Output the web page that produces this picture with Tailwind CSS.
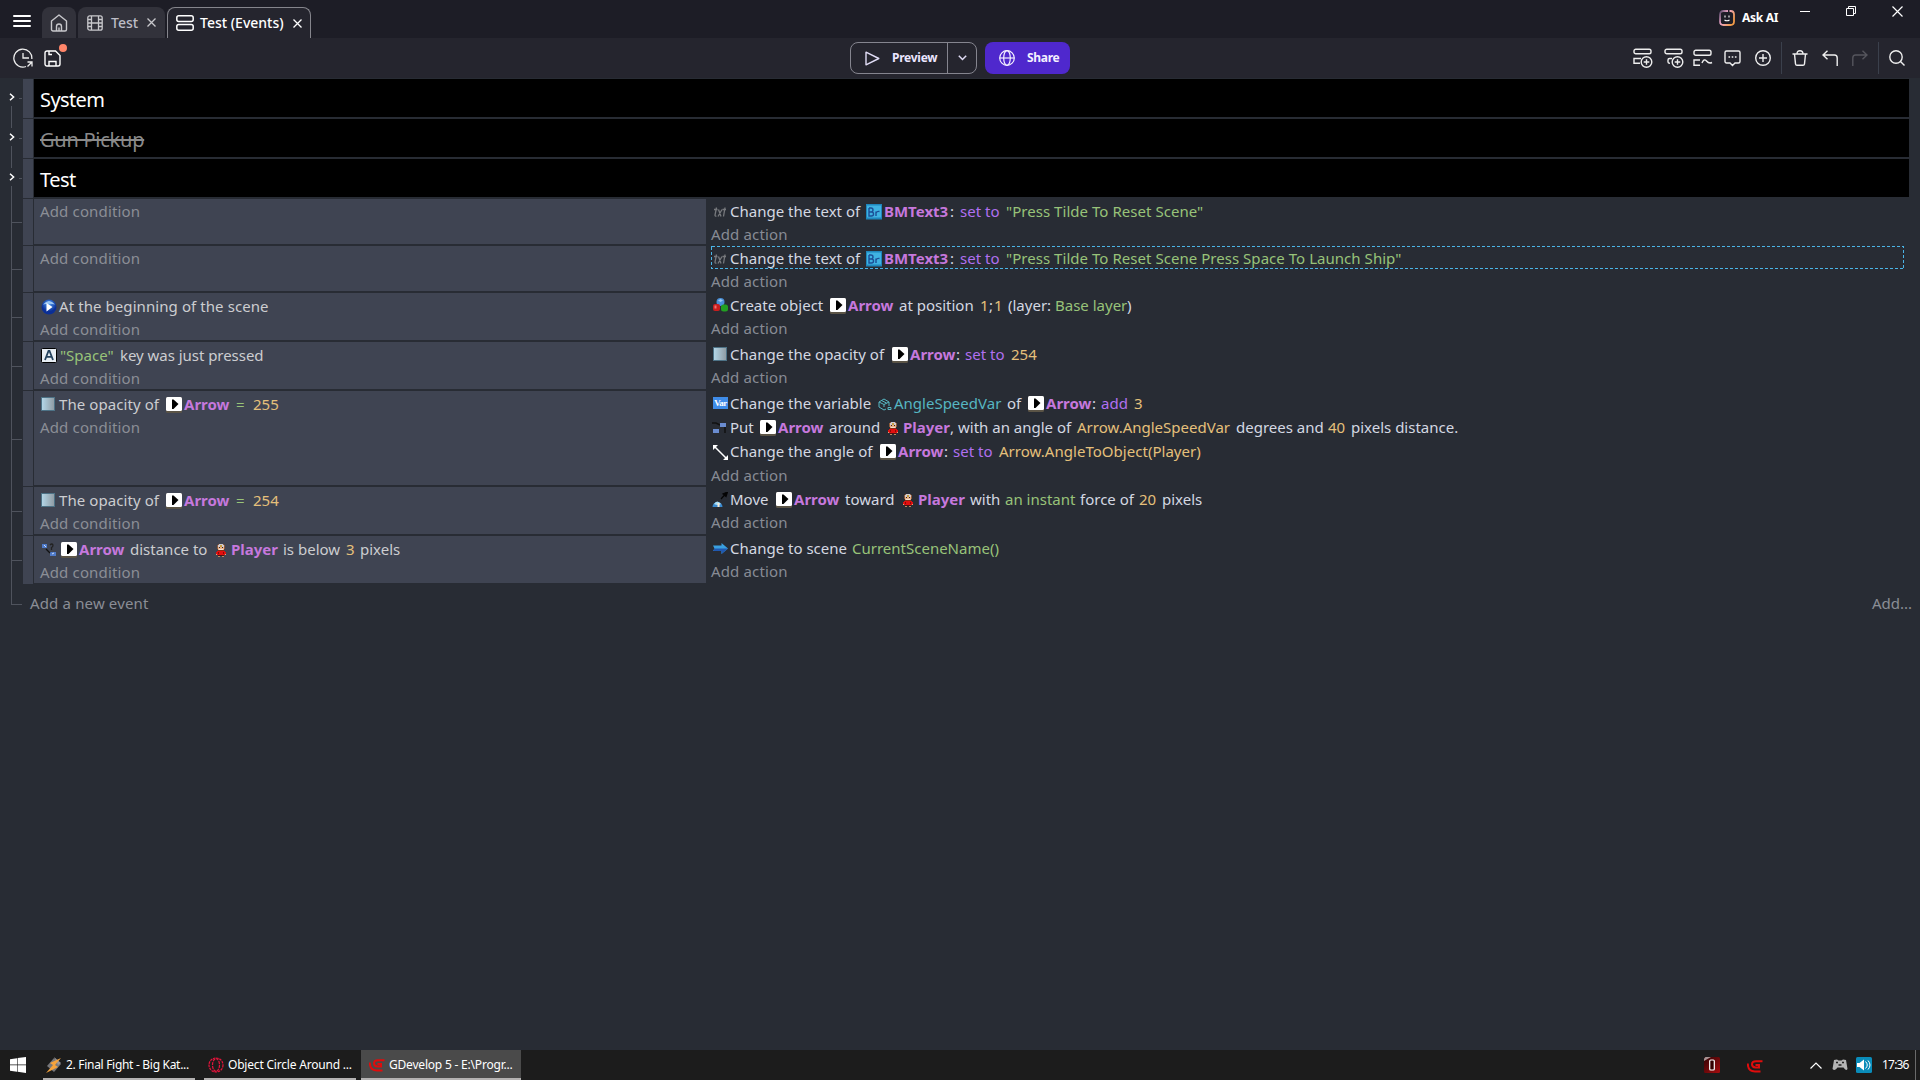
<!DOCTYPE html>
<html lang="en">

<head>
  <meta charset="UTF-8" />
  <meta name="viewport" content="width=device-width, initial-scale=1.0" />
  <title>GDevelop 5</title>
  <script src="https://cdn.jsdelivr.net/npm/@tailwindcss/browser@4"></script>
</head>

<body class="w-[1920px] h-[1080px] overflow-hidden bg-[#282c34] font-['Noto_Sans',sans-serif] flex flex-col">

  <!-- Shared icons -->
  <svg class="absolute w-0 h-0">
    <symbol id="arrow" viewBox="0 0 16 16">
      <rect width="16" height="16" rx="1.5" fill="#5b5446" />
      <rect width="16" height="14" rx="1.5" fill="#fff" />
      <path d="M6 2.500h1.500l5 4.500-5 5H6z" fill="#000" />
    </symbol>
    <symbol id="player" viewBox="0 0 10 13" shape-rendering="crispEdges">
      <path d="M2 0h6v1H2zM1 1h8v4H1z" fill="#8a5a3a" />
      <path d="M3 0h4v1H3zM2 1h6v2H2z" fill="#cfcad0" />
      <path d="M4 1h2v2H4z" fill="#c8a040" />
      <path d="M2 3h6v3H2z" fill="#e8b088" />
      <path d="M3 3h1v1H3zM6 3h1v1H6z" fill="#33221c" />
      <path d="M3 5h4v1H3z" fill="#f0e0d0" />
      <path d="M2 6h6v1H2z" fill="#8c2a14" />
      <path d="M1 7h8v1H1zM0 8h10v2H0zM1 10h8v1H1z" fill="#e01010" />
      <path d="M2 8h1v2H2zM7 8h1v2H7z" fill="#8c0808" />
      <path d="M0 10h1v1H0zM9 10h1v1H9z" fill="#e3a878" />
      <path d="M2 11h6v1H2z" fill="#501010" />
      <path d="M2 12h2v1H2zM6 12h2v1H6z" fill="#b88a60" />
    </symbol>
    <symbol id="bitmap" viewBox="0 0 16 16">
      <rect width="16" height="15.500" fill="#1f86bc" />
      <rect x="1" y="1.500" width="14" height="12" fill="#3fb2e2" />
      <path d="M3 4v8h2.500q2 0 2-2T5.500 8H3M3 4h2q2 0 2 2T5 8M10 12V7.500M10 9q1-2 3.500-1.500" fill="none" stroke="#1c4f96" stroke-width="1.400" />
    </symbol>
    <symbol id="txt" viewBox="0 0 14 12">
      <path d="M3.500 1.500l-1.500 7.500q0 1.500 1.500 1M1 3.500h3.500M5.500 3.500l2.500 7M9 3.500l-4 7M12 1.500l-1.500 9M9.500 3.500H13" fill="none" stroke="#77797d" stroke-width="1.300" />
    </symbol>
    <linearGradient id="fade">
      <stop offset="0" stop-color="#b4d8ea" />
      <stop offset="1" stop-color="#8f9aa2" />
    </linearGradient>
    <symbol id="opacity" viewBox="0 0 14 14">
      <rect x=".5" y=".5" width="13" height="13" fill="url(#fade)" stroke="#4d7286" />
    </symbol>
    <symbol id="win" viewBox="0 0 16 16">
      <path d="M0 2.200l7-1v6.400H0zM7.600 1.100L16 0v7.600H7.600zM0 8.300h7v6.500l-7-1zM7.600 8.300H16V16l-8.400-1.200z" fill="#fff" />
    </symbol>
    <symbol id="gd" viewBox="0 0 16 13">
      <path d="M15.500 1.200H9Q5 1.200 5 4.200T8.500 7.500H12V5H8.500M.8 3.500Q.8 11.500 8 11.500H13.500" fill="none" stroke="#e00c0c" stroke-width="2" />
    </symbol>
    <symbol id="chev" viewBox="0 0 6 8">
      <path d="M1 .8L4.600 4 1 7.200" fill="none" stroke="#fff" stroke-width="1.500" />
    </symbol>
  </svg>

  <!-- Title bar -->
  <header class="h-[38px] shrink-0 bg-[#1d1d26] flex items-end">
    <svg class="w-[18px] h-[12px] ml-[13px] mb-[11px]" viewBox="0 0 18 12" stroke="#fff" stroke-width="2" fill="none" stroke-linecap="round">
      <path d="M1 1h16M1 6h16M1 11h16" />
    </svg>
    <div class="w-[34px] h-[31px] ml-[11px] rounded-t-lg bg-[#32323b] flex items-center justify-center">
      <svg class="w-[18px] h-[18px]" viewBox="0 0 18 18" stroke="#c8c8cc" stroke-width="1.400" fill="none" stroke-linejoin="round">
        <path d="M1.500 7L9 1l7.500 6v8.500a1.500 1.500 0 0 1-1.500 1.500H3a1.500 1.500 0 0 1-1.500-1.500zM6.500 17v-4.500a2.500 2.500 0 0 1 5 0V17M9 13.500V17" />
      </svg>
    </div>
    <div class="w-[87px] h-[31px] ml-[2px] pl-[9px] rounded-t-lg bg-[#32323b] text-[#bdbdc6] flex items-center">
      <svg class="w-4 h-4" viewBox="0 0 16 16" stroke="#c8c8cc" stroke-width="1.300" fill="none">
        <rect x=".8" y=".8" width="14.400" height="14.400" rx="2" />
        <path d="M4.500 1v14M11.500 1v14M4.500 8h7M1 4.500h3.500M1 8h3.500M1 11.500h3.500M11.500 4.500H15M11.500 8H15M11.500 11.500H15" />
      </svg>
      <span class="w-[36px] ml-2 text-[14px] font-medium">Test</span>
      <svg class="w-[9px] h-[9px]" viewBox="0 0 9 9" stroke="#c8c8cc" stroke-width="1.300"><path d="M.5 .5l8 8M8.500 .5l-8 8" /></svg>
    </div>
    <div class="w-[144px] h-[31px] ml-[2px] pl-[8px] rounded-t-lg border border-b-0 border-[#85858c] bg-[#25252e] text-white flex items-center">
      <svg class="w-[18px] h-4" viewBox="0 0 18 16" stroke="#fff" stroke-width="1.500" fill="none">
        <rect x=".8" y=".8" width="16.400" height="5.600" rx="2" /><rect x=".8" y="9.600" width="16.400" height="5.600" rx="2" />
      </svg>
      <span class="w-[93px] ml-[6px] -mt-[2px] text-[14px] font-medium whitespace-nowrap">Test (Events)</span>
      <svg class="w-[9px] h-[9px]" viewBox="0 0 9 9" stroke="#fff" stroke-width="1.300"><path d="M.5 .5l8 8M8.500 .5l-8 8" /></svg>
    </div>

    <div class="ml-auto h-full flex items-start text-white">
      <div class="flex items-center gap-[7px] mt-[10px] w-[81px]">
        <svg class="w-[16px] h-[16px]" viewBox="0 0 16 16" fill="none">
          <linearGradient id="ai" x1="0" y1="0" x2="1" y2=".6">
            <stop offset="0" stop-color="#5a4a6a" /><stop offset=".45" stop-color="#f0a8c8" /><stop offset="1" stop-color="#f09a48" />
          </linearGradient>
          <path d="M10.500 1h1Q15 1 15 4.500v7Q15 15 11.500 15h-7Q1 15 1 11.500v-7Q1 1 4.500 1H9" stroke="url(#ai)" stroke-width="1.800" />
          <path d="M6 5.500v2M10 5.500v2M5.500 10q2.500 1.500 5 0" stroke="#fff" stroke-width="1.100" />
        </svg>
        <span class="text-[12px] leading-4 font-bold whitespace-nowrap tracking-[-0.3px]">Ask AI</span>
      </div>
      <svg class="w-[10px] h-[12px] mt-[5px]" viewBox="0 0 10 12" stroke="#fff"><path d="M0 6.500h10" /></svg>
      <svg class="w-[10px] h-[10px] ml-[36px] mt-[6px]" viewBox="0 0 10 10" stroke="#fff" fill="none">
        <path d="M.5 2.500h7v7h-7zM2.500 2.500v-2h7v7h-2" />
      </svg>
      <svg class="w-[11px] h-[11px] ml-[36px] mt-[6px] mr-[17px]" viewBox="0 0 11 11" stroke="#fff" stroke-width="1.200"><path d="M.5 .5l10 10M10.500 .5l-10 10" /></svg>
    </div>
  </header>

  <!-- Toolbar -->
  <div class="h-[40px] shrink-0 bg-[#25252e] flex items-center">
    <svg class="w-[20px] h-[20px] ml-[13px]" viewBox="0 0 20 20" stroke="#eee" stroke-width="1.300" fill="none">
      <path d="M18.800 11A9 9 0 1 0 13 18.500M10 5v5h6M14.500 14H19v4.500M19 14l-4.500 4.500" />
    </svg>
    <div class="relative ml-[11px] mr-px">
      <svg class="w-[17px] h-[17px]" viewBox="0 0 17 17" stroke="#fff" stroke-width="1.400" fill="none">
        <path d="M1 3a2 2 0 0 1 2-2h8.500L16 5.500V14a2 2 0 0 1-2 2H3a2 2 0 0 1-2-2zM5 1v3.500h3M5 16v-4.500h7V16" />
      </svg>
      <div class="absolute w-2 h-2 rounded-full bg-[#ff8569] left-[15px] -top-[6px]"></div>
    </div>

    <div class="ml-[788px] w-[127px] h-[32px] border border-[#85858f] rounded-lg flex items-stretch text-[#ebe6ff]">
      <div class="w-[97px] border-r border-[#85858f] flex items-center">
        <svg class="w-[15px] h-[15px] ml-[14px]" viewBox="0 0 15 15" stroke="#e0dcf5" stroke-width="1.400" fill="none" stroke-linejoin="round"><path d="M1 1.200v12.600L13.800 7.500z" /></svg>
        <span class="ml-[12px] text-[12px] font-bold tracking-[-0.25px]">Preview</span>
      </div>
      <div class="flex-1 flex items-center justify-center">
        <svg class="w-[9px] h-[6px]" viewBox="0 0 9 6" stroke="#e0dcf5" stroke-width="1.500" fill="none"><path d="M.8 .8l3.700 3.700L8.200 .8" /></svg>
      </div>
    </div>
    <div class="ml-2 w-[85px] h-[32px] rounded-lg bg-[#4f28cd] text-[#f4f0ff] flex items-center">
      <svg class="w-[16px] h-[16px] ml-[14px]" viewBox="0 0 16 16" stroke="#f4f0ff" stroke-width="1.200" fill="none">
        <circle cx="8" cy="8" r="7.300" /><ellipse cx="8" cy="8" rx="3.300" ry="7.300" /><path d="M.7 8h14.600" />
      </svg>
      <span class="ml-[12px] text-[12px] font-bold tracking-[-0.3px]">Share</span>
    </div>

    <div class="ml-auto h-full flex items-center mr-[15px]">
      <svg class="w-[20px] h-[20px]" viewBox="0 0 20 20" stroke="#eee" stroke-width="1.400" fill="none">
        <rect x="1" y="1.200" width="17" height="4.600" rx="1.800" /><path d="M8 10.500H1v4.800h6" /><circle cx="13.500" cy="14" r="5.300" /><path d="M10.700 14h5.600M13.500 11.200v5.600" />
      </svg>
      <svg class="w-[20px] h-[20px] ml-[11px]" viewBox="0 0 20 20" stroke="#eee" stroke-width="1.400" fill="none">
        <rect x="1" y="1.200" width="17" height="4.600" rx="1.800" /><path d="M8 10.500H5.500Q4 10.500 4 12v2q0 1.300 2 1.300" /><circle cx="13.500" cy="14" r="5.300" /><path d="M10.700 14h5.600M13.500 11.200v5.600" />
      </svg>
      <svg class="w-[20px] h-[18px] ml-[9px]" viewBox="0 0 20 18" stroke="#eee" stroke-width="1.400" fill="none">
        <rect x="1" y="1.200" width="17" height="5" rx="1.800" /><path d="M7 11H1v5.300h6M9 14q2-5 4.500-2t5.500 1.500" />
      </svg>
      <svg class="w-[17px] h-[17px] ml-[11px]" viewBox="0 0 17 17" stroke="#eee" stroke-width="1.400" fill="none">
        <path d="M2.500 1h12A1.500 1.500 0 0 1 16 2.500v9a1.500 1.500 0 0 1-1.500 1.500H11l-2.500 2.500L6 13H2.500A1.500 1.500 0 0 1 1 11.500v-9A1.500 1.500 0 0 1 2.500 1z" />
        <path d="M4.500 7h1.600M7.700 7h1.600M10.900 7h1.600" stroke-width="1.700" />
      </svg>
      <svg class="w-[16px] h-[16px] ml-[14px]" viewBox="0 0 16 16" stroke="#eee" stroke-width="1.400" fill="none">
        <circle cx="8" cy="8" r="7.300" /><path d="M4 8h8M8 4v8" />
      </svg>
      <div class="w-px h-8 bg-[#3b404c] ml-[10px]"></div>
      <svg class="w-[16px] h-[16px] ml-[10px]" viewBox="0 0 16 16" stroke="#eee" stroke-width="1.400" fill="none">
        <path d="M.5 4h15M5 4q0-3.300 3-3.300T11 4M2.500 4l1 9.800q.2 1.500 1.500 1.500h6q1.300 0 1.500-1.500l1-9.800" />
      </svg>
      <svg class="w-[16px] h-[16px] ml-[14px]" viewBox="0 0 16 16" stroke="#eee" stroke-width="1.400" fill="none">
        <path d="M5.500 .8L1 5l4.500 4.200M1 5h11.500q2.700 0 2.700 3v8" />
      </svg>
      <svg class="w-[16px] h-[16px] ml-[14px]" viewBox="0 0 16 16" stroke="#55555d" stroke-width="1.400" fill="none">
        <path d="M10.500 .8L15 5l-4.500 4.200M15 5H3.500Q.8 5 .8 8v8" />
      </svg>
      <div class="w-px h-8 bg-[#3b404c] ml-[10px]"></div>
      <svg class="w-[16px] h-[16px] ml-[10px]" viewBox="0 0 16 16" stroke="#eee" stroke-width="1.400" fill="none">
        <circle cx="7" cy="7" r="6.200" /><path d="M11.500 11.500l4 4" />
      </svg>
    </div>
  </div>

  <!-- Events sheet -->
  <main class="flex-1 pt-px text-[15px] leading-6 whitespace-nowrap text-[#d4d8e2]">

    <!-- Groups -->
    <div class="h-[40px] flex">
      <div class="w-[23px] flex flex-col justify-end relative">
        <svg class="absolute left-[9px] top-[14px] w-[6px] h-[8px]"><use href="#chev" /></svg>
        <div class="absolute left-[19px] top-[19px] w-[3px] h-px bg-[#4f535d]"></div>
        <div class="ml-[11px] w-px h-[13px] bg-[#4f535d]"></div>
      </div>
      <div class="w-[10px] h-[39px] bg-[#3f4452]"></div>
      <div class="ml-px w-[1875px] h-[38px] bg-black pl-[6px] pt-[3px] text-[20px] leading-[36px] text-white"><span class="tracking-[-0.6px]">System</span></div>
    </div>
    <div class="h-[40px] flex">
      <div class="w-[23px] flex flex-col justify-between relative">
        <svg class="absolute left-[9px] top-[14px] w-[6px] h-[8px]"><use href="#chev" /></svg>
        <div class="absolute left-[19px] top-[19px] w-[3px] h-px bg-[#4f535d]"></div>
        <div class="ml-[11px] w-px h-[9px] bg-[#4f535d]"></div>
        <div class="ml-[11px] w-px h-[13px] bg-[#4f535d]"></div>
      </div>
      <div class="w-[10px] h-[39px] bg-[#3f4452]"></div>
      <div class="ml-px w-[1875px] h-[38px] bg-black pl-[6px] pt-[3px] text-[20px] leading-[36px] text-[#8a8a8a]"><span class="line-through decoration-2 tracking-[-0.25px]">Gun Pickup</span></div>
    </div>
    <div class="h-[40px] flex">
      <div class="w-[23px] flex flex-col justify-between relative">
        <svg class="absolute left-[9px] top-[14px] w-[6px] h-[8px]"><use href="#chev" /></svg>
        <div class="absolute left-[19px] top-[19px] w-[3px] h-px bg-[#4f535d]"></div>
        <div class="ml-[11px] w-px h-[9px] bg-[#4f535d]"></div>
        <div class="ml-[11px] w-px h-[13px] bg-[#4f535d]"></div>
      </div>
      <div class="w-[10px] h-[39px] bg-[#3f4452]"></div>
      <div class="ml-px w-[1875px] h-[38px] bg-black pl-[6px] pt-[3px] text-[20px] leading-[36px] text-white"><span class="tracking-[-0.5px]">Test</span></div>
    </div>

    <!-- Event 1 -->
    <div class="h-[47px] flex">
      <div class="w-[11px] ml-[11px] mr-px border-l border-[#4f535d] flex items-center"><div class="w-full h-px bg-[#4f535d]"></div></div>
      <div class="w-[10px] h-[46px] bg-[#3f4452]"></div>
      <div class="ml-px w-[672px] h-[45px] bg-[#3f4452] pl-[6px] text-[#8b8e96] tracking-[0.15px]">Add condition</div>
      <div class="pl-[5px]">
        <div class="h-6 flex items-center">
          <div class="w-[19px] pl-[2px] pt-px"><svg class="w-[14px] h-[12px]"><use href="#txt" /></svg></div>
          <div class="w-[136px]">Change the text of</div>
          <svg class="w-4 h-4 mr-[2px] mt-px"><use href="#bitmap" /></svg>
          <b class="w-[66px] text-[#c678dd]">BMText3</b>
          <div class="w-[10px]">:</div>
          <div class="w-[46px] text-[#b070f0]">set to</div>
          <div class="text-[#98c379] tracking-[0.04px]">"Press Tilde To Reset Scene"</div>
        </div>
        <div class="h-[23px] leading-[22px] text-[#878b94] tracking-[0.15px]">Add action</div>
      </div>
    </div>

    <!-- Event 2 -->
    <div class="h-[47px] flex">
      <div class="w-[11px] ml-[11px] mr-px border-l border-[#4f535d] flex items-center"><div class="w-full h-px bg-[#4f535d]"></div></div>
      <div class="w-[10px] h-[46px] bg-[#3f4452]"></div>
      <div class="ml-px w-[672px] h-[45px] bg-[#3f4452] pl-[6px] text-[#8b8e96] tracking-[0.15px]">Add condition</div>
      <div class="pl-[5px]">
        <div class="h-6 w-[1193px] flex items-center relative">
          <svg class="absolute left-0 top-0 w-[1193px] h-[23px]" fill="none"><rect x=".5" y=".5" width="1192" height="22" stroke="#4ab4e6" stroke-dasharray="3 2" shape-rendering="crispEdges" /></svg>
          <div class="w-[19px] pl-[2px] pt-px"><svg class="w-[14px] h-[12px]"><use href="#txt" /></svg></div>
          <div class="w-[136px]">Change the text of</div>
          <svg class="w-4 h-4 mr-[2px] mt-px"><use href="#bitmap" /></svg>
          <b class="w-[66px] text-[#c678dd]">BMText3</b>
          <div class="w-[10px]">:</div>
          <div class="w-[46px] text-[#b070f0]">set to</div>
          <div class="text-[#98c379] tracking-[0.04px]">"Press Tilde To Reset Scene Press Space To Launch Ship"</div>
        </div>
        <div class="h-[23px] leading-[22px] text-[#878b94] tracking-[0.15px]">Add action</div>
      </div>
    </div>

    <!-- Event 3 -->
    <div class="h-[49px] flex">
      <div class="w-[11px] ml-[11px] mr-px border-l border-[#4f535d] flex items-center"><div class="w-full h-px bg-[#4f535d]"></div></div>
      <div class="w-[10px] h-[48px] bg-[#3f4452]"></div>
      <div class="ml-px w-[672px] h-[47px] bg-[#3f4452] pl-[6px] pt-px text-[#cccdd0]">
        <div class="h-6 flex items-center">
          <svg class="w-4 h-4 ml-px mr-[2px] mt-px" viewBox="0 0 16 16">
            <radialGradient id="ball" cx=".5" cy=".3"><stop offset="0" stop-color="#4f9cf4" /><stop offset="1" stop-color="#0b2f96" /></radialGradient>
            <circle cx="8" cy="8" r="7.500" fill="url(#ball)" /><path d="M2 5.500Q8-1.500 14 5.500 8 4 2 5.500z" fill="#9cc6f2" /><path d="M5.500 4l6 4-6 4.500z" fill="#fff" />
          </svg>
          <div class="tracking-[0.08px]">At the beginning of the scene</div>
        </div>
        <div class="leading-[22px] text-[#8b8e96] tracking-[0.15px]">Add condition</div>
      </div>
      <div class="pl-[5px]">
        <div class="h-6 flex items-center">
          <svg class="w-[15px] h-[15px] ml-[2px] mr-[2px]" viewBox="0 0 15 15">
            <circle cx="7.500" cy="4" r="4" fill="#4a90d8" /><rect y="6" width="7" height="7" rx="2" fill="#c81e1e" /><rect x="8" y="6.500" width="7" height="7" rx="2.500" fill="#22a022" /><path d="M5 2.500l2.500-1.500L10 2.500 7.500 4z" fill="#9cc8f0" /><path d="M1.500 7.500h2v3h-2z" fill="#f07070" />
          </svg>
          <div class="w-[99px]">Create object</div>
          <svg class="w-4 h-4 ml-px mr-[2px] mt-[2px]"><use href="#arrow" /></svg>
          <b class="w-[51px] text-[#c678dd]">Arrow</b>
          <div class="w-[81px]">at position</div>
          <div class="w-[9px] text-[#e5c07b]">1</div>
          <div class="w-[5px]">;</div>
          <div class="w-[14px] text-[#e5c07b]">1</div>
          <div class="w-[47px]">(layer:</div>
          <div class="w-[72px] text-[#98c379]">Base layer</div>
          <div>)</div>
        </div>
        <div class="leading-[22px] text-[#878b94] tracking-[0.15px]">Add action</div>
      </div>
    </div>

    <!-- Event 4 -->
    <div class="h-[49px] flex">
      <div class="w-[11px] ml-[11px] mr-px border-l border-[#4f535d] flex items-center"><div class="w-full h-px bg-[#4f535d]"></div></div>
      <div class="w-[10px] h-[48px] bg-[#3f4452]"></div>
      <div class="ml-px w-[672px] h-[47px] bg-[#3f4452] pl-[6px] pt-px text-[#cccdd0]">
        <div class="h-6 flex items-center">
          <svg class="w-4 h-[15px] ml-px mr-[3px]" viewBox="0 0 16 15">
            <rect x=".5" y=".5" width="15" height="14" rx="1" fill="#e8eef4" stroke="#000" /><path d="M4 12l3.500-9h1L12 12M5.500 8.800h5" stroke="#24425e" stroke-width="1.800" fill="none" />
          </svg>
          <div class="w-[60px] text-[#98c379]">"Space"</div>
          <div class="tracking-[-0.04px]">key was just pressed</div>
        </div>
        <div class="leading-[22px] text-[#8b8e96] tracking-[0.15px]">Add condition</div>
      </div>
      <div class="pl-[5px]">
        <div class="h-6 flex items-center">
          <svg class="w-[14px] h-[14px] ml-[2px] mr-[3px]"><use href="#opacity" /></svg>
          <div class="w-[161px]">Change the opacity of</div>
          <svg class="w-4 h-4 ml-px mr-[2px] mt-[2px]"><use href="#arrow" /></svg>
          <b class="w-[46px] text-[#c678dd]">Arrow</b>
          <div class="w-[9px]">:</div>
          <div class="w-[46px] text-[#b070f0]">set to</div>
          <div class="text-[#e5c07b]">254</div>
        </div>
        <div class="leading-[22px] text-[#878b94] tracking-[0.15px]">Add action</div>
      </div>
    </div>

    <!-- Event 5 -->
    <div class="h-[96px] flex">
      <div class="w-[11px] ml-[11px] mr-px border-l border-[#4f535d] flex items-center"><div class="w-full h-px bg-[#4f535d]"></div></div>
      <div class="w-[10px] h-[95px] bg-[#3f4452]"></div>
      <div class="ml-px w-[672px] h-[94px] bg-[#3f4452] pl-[6px] pt-px text-[#cccdd0]">
        <div class="h-6 flex items-center">
          <svg class="w-[14px] h-[14px] ml-px mr-[4px]"><use href="#opacity" /></svg>
          <div class="w-[106px] tracking-[0.08px]">The opacity of</div>
          <svg class="w-4 h-4 ml-px mr-[2px] mt-[2px]"><use href="#arrow" /></svg>
          <b class="w-[52px] text-[#c678dd]">Arrow</b>
          <div class="w-[17px] text-[#98c379]">=</div>
          <div class="text-[#e5c07b]">255</div>
        </div>
        <div class="leading-[22px] text-[#8b8e96] tracking-[0.15px]">Add condition</div>
      </div>
      <div class="pl-[5px]">
        <div class="h-6 flex items-center">
          <div class="w-[15px] h-[12px] ml-[2px] mr-[2px] bg-[#3f8ce8] text-white font-['Liberation_Serif',serif] font-bold text-[9px] leading-[12px] text-center tracking-[-0.5px]">Var</div>
          <div class="w-[148px]">Change the variable</div>
          <svg class="w-[14px] h-[13px] mr-[2px] mt-[2px]" viewBox="0 0 14 13" stroke="#56b6c2" fill="none"><path d="M8 11L6 12 1 9V4l5-3 5 3v4M1 4l5 2.500L11 4M6 6.500V9M3.500 2.500l5 2.500" /><path d="M10 9.500h3v2h-3z" /></svg>
          <div class="w-[113px] text-[#56b6c2]">AngleSpeedVar</div>
          <div class="w-[20px]">of</div>
          <svg class="w-4 h-4 ml-px mr-[2px] mt-[2px]"><use href="#arrow" /></svg>
          <b class="w-[46px] text-[#c678dd]">Arrow</b>
          <div class="w-[9px]">:</div>
          <div class="w-[33px] text-[#b070f0]">add</div>
          <div class="text-[#e5c07b]">3</div>
        </div>
        <div class="h-6 flex items-center">
          <svg class="w-[15px] h-[13px] ml-px mr-[3px] mt-[2px]" viewBox="0 0 15 13"><path d="M0 1h4l4 2M13 5v6" stroke="#111" stroke-width="1.500" fill="none" /><path d="M8 1h6v4H8zM1 7h6v4H1z" fill="#6a8cd0" /></svg>
          <div class="w-[29px]">Put</div>
          <svg class="w-4 h-4 ml-px mr-[2px] mt-[2px]"><use href="#arrow" /></svg>
          <b class="w-[51px] text-[#c678dd]">Arrow</b>
          <div class="w-[59px]">around</div>
          <svg class="w-[10px] h-[13px] mr-[5px] mt-[3px]"><use href="#player" /></svg>
          <b class="w-[47px] text-[#c678dd]">Player</b>
          <div class="w-[8px]">,</div>
          <div class="w-[119px]">with an angle of</div>
          <div class="w-[159px] text-[#e5c07b]">Arrow.AngleSpeedVar</div>
          <div class="w-[92px]">degrees and</div>
          <div class="w-[23px] text-[#e5c07b]">40</div>
          <div>pixels distance.</div>
        </div>
        <div class="h-6 flex items-center">
          <svg class="w-[15px] h-[15px] ml-[2px] mr-[2px] mt-[2px]" viewBox="0 0 15 15"><path d="M2 2l11 11" stroke="#fff" stroke-width="1.500" /><path d="M0 0h5L0 5zM15 15h-5l5-5z" fill="#fff" /></svg>
          <div class="w-[149px]">Change the angle of</div>
          <svg class="w-4 h-4 ml-px mr-[2px] mt-[2px]"><use href="#arrow" /></svg>
          <b class="w-[46px] text-[#c678dd]">Arrow</b>
          <div class="w-[9px]">:</div>
          <div class="w-[46px] text-[#b070f0]">set to</div>
          <div class="text-[#e5c07b] tracking-[0.03px]">Arrow.AngleToObject(Player)</div>
        </div>
        <div class="leading-6 text-[#878b94] tracking-[0.15px]">Add action</div>
      </div>
    </div>

    <!-- Event 6 -->
    <div class="h-[49px] flex">
      <div class="w-[11px] ml-[11px] mr-px border-l border-[#4f535d] flex items-center"><div class="w-full h-px bg-[#4f535d]"></div></div>
      <div class="w-[10px] h-[48px] bg-[#3f4452]"></div>
      <div class="ml-px w-[672px] h-[47px] bg-[#3f4452] pl-[6px] pt-px text-[#cccdd0]">
        <div class="h-6 flex items-center">
          <svg class="w-[14px] h-[14px] ml-px mr-[4px]"><use href="#opacity" /></svg>
          <div class="w-[106px] tracking-[0.08px]">The opacity of</div>
          <svg class="w-4 h-4 ml-px mr-[2px] mt-[2px]"><use href="#arrow" /></svg>
          <b class="w-[52px] text-[#c678dd]">Arrow</b>
          <div class="w-[17px] text-[#98c379]">=</div>
          <div class="text-[#e5c07b]">254</div>
        </div>
        <div class="leading-[22px] text-[#8b8e96] tracking-[0.15px]">Add condition</div>
      </div>
      <div class="pl-[5px]">
        <div class="h-6 flex items-center">
          <svg class="w-4 h-4 ml-px mr-[2px] mt-[2px]" viewBox="0 0 16 16"><path d="M.5 15a5 5 0 1 1 10 0z" fill="#3a8ad0" /><path d="M2 12q3-5 7 0-3 2-7 0z" fill="#a8dcf4" /><path d="M5.500 11h2v4h-2z" fill="#f4e8d4" /><path d="M9 7l4-4.500M15.500 0l-4.500 2 3 2.500z" stroke="#050505" stroke-width="1.200" fill="#050505" /></svg>
          <div class="w-[45px]">Move</div>
          <svg class="w-4 h-4 ml-px mr-[2px] mt-[2px]"><use href="#arrow" /></svg>
          <b class="w-[51px] text-[#c678dd]">Arrow</b>
          <div class="w-[58px]">toward</div>
          <svg class="w-[10px] h-[13px] mr-[5px] mt-[3px]"><use href="#player" /></svg>
          <b class="w-[52px] text-[#c678dd]">Player</b>
          <div class="w-[35px]">with</div>
          <div class="w-[75px] text-[#98c379]">an instant</div>
          <div class="w-[59px]">force of</div>
          <div class="w-[23px] text-[#e5c07b]">20</div>
          <div>pixels</div>
        </div>
        <div class="leading-[22px] text-[#878b94] tracking-[0.15px]">Add action</div>
      </div>
    </div>

    <!-- Event 7 -->
    <div class="h-[48px] flex">
      <div class="w-[11px] ml-[11px] mr-px border-l border-[#4f535d] flex items-center"><div class="w-full h-px bg-[#4f535d]"></div></div>
      <div class="w-[10px] h-[48px] bg-[#3f4452]"></div>
      <div class="ml-px w-[672px] h-[47px] bg-[#3f4452] pl-[6px] pt-px text-[#cccdd0]">
        <div class="h-6 flex items-center">
          <svg class="w-4 h-[14px] ml-px mr-[3px] mt-[2px]" viewBox="0 0 16 14"><path d="M1 1h5v4H1zM9 9h6v4H9z" fill="#4f7ac8" /><path d="M3 2l2 2M11 11l2-1" stroke="#cfe0f8" /><path d="M5 6l4 4" stroke="#111" stroke-width="1.300" /><path d="M9 2q2-2 3 0 0 2-1.500 2.500V7" stroke="#222" fill="none" stroke-width="1.300" /></svg>
          <svg class="w-4 h-4 ml-px mr-[2px] mt-px"><use href="#arrow" /></svg>
          <b class="w-[51px] text-[#c678dd]">Arrow</b>
          <div class="w-[86px]">distance to</div>
          <svg class="w-[10px] h-[13px] mr-[5px] mt-[3px]"><use href="#player" /></svg>
          <b class="w-[52px] text-[#c678dd]">Player</b>
          <div class="w-[63px]">is below</div>
          <div class="w-[14px] text-[#e5c07b]">3</div>
          <div>pixels</div>
        </div>
        <div class="leading-[22px] text-[#8b8e96] tracking-[0.15px]">Add condition</div>
      </div>
      <div class="pl-[5px]">
        <div class="h-6 flex items-center">
          <svg class="w-[15px] h-[11px] ml-[2px] mr-[2px]" viewBox="0 0 15 11"><path d="M0 2.500h8.500V0L15 5.500 8.500 11V8H0l1.500-2.500z" fill="#3aa0e0" /><path d="M1.500 5.500H15L8.500 11V8H0z" fill="#2058b0" /></svg>
          <div class="w-[122px]">Change to scene</div>
          <div class="text-[#98c379]">CurrentSceneName()</div>
        </div>
        <div class="leading-[22px] text-[#878b94] tracking-[0.15px]">Add action</div>
      </div>
    </div>

    <div class="h-[40px] flex text-[#8b8e96]">
      <div class="w-[11px] h-[21px] ml-[11px] border-l border-b border-[#4f535d]"></div>
      <div class="ml-[8px] leading-[38px] tracking-[0.15px]">Add a new event</div>
      <div class="ml-auto mr-[8px] leading-[38px]">Add...</div>
    </div>
  </main>

  <!-- Taskbar -->
  <footer class="h-[30px] shrink-0 bg-[#1c1c1c] flex items-stretch text-[12px] text-white whitespace-nowrap">
    <svg class="w-[16px] h-[16px] ml-[10px] mt-[7px]"><use href="#win" /></svg>
    <div class="ml-[17px] w-[152px] border-b-2 border-[#b4b2b2] flex items-center pl-[3px] pt-[2px]">
      <svg class="w-4 h-4" viewBox="0 0 16 16"><path d="M1 9l7-8 7 6-7 8z" fill="#77777a" /><path d="M8 0l7 6-3 2z" fill="#98989c" /><path d="M15 1L4 6l3 2-7 8 12-6-3-2z" fill="#f5a33c" /></svg>
      <span class="ml-1 tracking-[-0.3px]">2. Final Fight - Big Kat...</span>
    </div>
    <div class="ml-[9px] w-[152px] border-b-2 border-[#b4b2b2] flex items-center pl-[4px] pt-[2px]">
      <svg class="w-4 h-4" viewBox="0 0 16 16" stroke="#e8143c" stroke-width="1.200" fill="none"><circle cx="8" cy="8" r="7" stroke-dasharray="2.500 .8" /><ellipse cx="8" cy="8" rx="3.500" ry="6.300" stroke-dasharray="3 .8" /></svg>
      <span class="ml-1 tracking-[-0.2px]">Object Circle Around ...</span>
    </div>
    <div class="ml-[5px] w-[160px] border-b-2 border-[#b4b2b2] bg-[#4a4a4a] flex items-center pl-[8px] pt-[2px]">
      <svg class="w-4 h-[13px]"><use href="#gd" /></svg>
      <span class="ml-1 tracking-[-0.2px]">GDevelop 5 - E:\Progr...</span>
    </div>
    <div class="ml-auto flex items-center">
      <svg class="w-4 h-4" viewBox="0 0 16 16">
        <linearGradient id="odo" x1="0" y1="0" x2="1" y2="1"><stop offset="0" stop-color="#300406" /><stop offset="1" stop-color="#a80c0e" /></linearGradient>
        <rect width="16" height="16" rx="1.500" fill="url(#odo)" /><path d="M0 4V1.500L1.500 0H7z" fill="#a89494" /><rect x="5.700" y="3" width="4.600" height="10" rx="1" stroke="#fff" stroke-width="1.200" fill="#300" />
      </svg>
      <svg class="w-4 h-[13px] ml-[27px] mt-[2px]"><use href="#gd" /></svg>
      <svg class="w-[12px] h-[7px] ml-[47px]" viewBox="0 0 12 7" stroke="#fff" stroke-width="1.200" fill="none"><path d="M.5 6.500L6 1l5.500 5.500" /></svg>
      <svg class="w-4 h-[12px] ml-[10px]" viewBox="0 0 16 12"><path d="M2 1l3-.5 1.500 1h3l1.500-1 3 .5 1.500 9q-1.500 2.500-4-1.500h-6q-2.500 4-5 1.500z" fill="#b4b4b4" /><path d="M4 3.500h2M10 3.500h2M6.500 6h3" stroke="#222" stroke-width="1.500" /></svg>
      <svg class="w-4 h-4 ml-[8px]" viewBox="0 0 16 16"><rect width="16" height="16" rx="1.500" fill="#0a8cba" /><path d="M1 6h2.500L8 2.500v11L3.500 10H1z" fill="#fff" /><path d="M9.500 4.500q3.500 3.500 0 7M12 3.500q4 4.500 0 9" stroke="#fff" fill="none" /></svg>
      <span class="w-[33px] ml-[10px] tracking-[-0.8px]">17:36</span>
      <div class="w-px h-full bg-[#6a6a6a] mr-1"></div>
    </div>
  </footer>

</body>

</html>
